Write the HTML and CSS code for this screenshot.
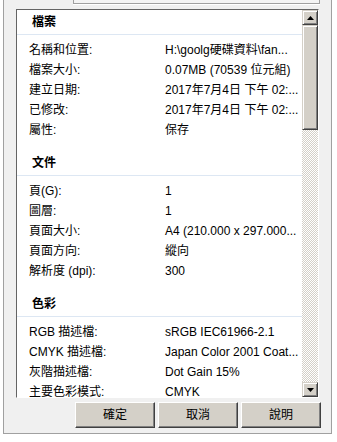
FILE: index.html
```html
<!DOCTYPE html>
<html>
<head>
    <meta charset="utf-8">
    <title>文件屬性</title>
    <link rel="stylesheet" href="styles.css">
</head>
<body>
    <div class="frame">
        <div class="top-box"></div>

        <div class="listbox">
            <div class="list-content">
                <div class="section">
                    <div class="section-title">檔案</div>
                    <div class="rows">
                        <div class="row"><span class="label">名稱和位置:</span><span class="value">H:\goolg硬碟資料\fan...</span></div>
                        <div class="row"><span class="label">檔案大小:</span><span class="value">0.07MB (70539 位元組)</span></div>
                        <div class="row"><span class="label">建立日期:</span><span class="value">2017年7月4日 下午 02:...</span></div>
                        <div class="row"><span class="label">已修改:</span><span class="value">2017年7月4日 下午 02:...</span></div>
                        <div class="row"><span class="label">屬性:</span><span class="value">保存</span></div>
                    </div>
                </div>
                <div class="section">
                    <div class="section-title">文件</div>
                    <div class="rows">
                        <div class="row"><span class="label">頁(G):</span><span class="value">1</span></div>
                        <div class="row"><span class="label">圖層:</span><span class="value">1</span></div>
                        <div class="row"><span class="label">頁面大小:</span><span class="value">A4 (210.000 x 297.000...</span></div>
                        <div class="row"><span class="label">頁面方向:</span><span class="value">縱向</span></div>
                        <div class="row"><span class="label">解析度 (dpi):</span><span class="value">300</span></div>
                    </div>
                </div>
                <div class="section">
                    <div class="section-title">色彩</div>
                    <div class="rows">
                        <div class="row"><span class="label">RGB 描述檔:</span><span class="value">sRGB IEC61966-2.1</span></div>
                        <div class="row"><span class="label">CMYK 描述檔:</span><span class="value">Japan Color 2001 Coat...</span></div>
                        <div class="row"><span class="label">灰階描述檔:</span><span class="value">Dot Gain 15%</span></div>
                        <div class="row"><span class="label">主要色彩模式:</span><span class="value">CMYK</span></div>
                    </div>
                </div>
            </div>

            <div class="scrollbar">
                <div class="sb-btn">
                    <svg width="7" height="4" viewBox="0 0 7 4"><path d="M3.5 0 L7 4 L0 4 Z" fill="#000"/></svg>
                </div>
                <div class="sb-thumb"></div>
                <div class="sb-track"></div>
                <div class="sb-btn">
                    <svg width="7" height="4" viewBox="0 0 7 4"><path d="M0 0 L7 0 L3.5 4 Z" fill="#000"/></svg>
                </div>
            </div>
        </div>

        <div class="buttons">
            <div class="btn">確定</div>
            <div class="btn">取消</div>
            <div class="btn">說明</div>
        </div>
    </div>
</body>
</html>
```

FILE: styles.css
```css
body {
    margin: 0;
    background: #ffffff;
    font-family: 'Liberation Sans', 'Noto Sans CJK TC', sans-serif;
    font-size: 12px;
    color: #000;
}

.frame {
    margin-left: 3px;
    width: 327px;
    height: 433px;
    background: #f0f0f0;
    border: 1px solid #a0a0a0;
    border-top: none;
    display: flex;
    flex-direction: column;
}

.top-box {
    margin-left: 69px;
    width: 245px;
    height: 3px;
    background: #f4f4f4;
    border: 1px solid #a0a0a0;
    border-top: none;
    box-shadow: 0 1px 0 #ffffff;
}

.listbox {
    margin-top: 5px;
    margin-left: 12px;
    width: 301px;
    height: 387px;
    display: flex;
    background: #ffffff;
    border: 1px solid;
    border-color: #646464 #ffffff #ffffff #646464;
}

.list-content {
    flex: 1;
    overflow: hidden;
}

.section-title {
    height: 24px;
    line-height: 24px;
    padding-left: 15px;
    font-weight: bold;
    border-bottom: 1px solid #dde7f3;
}

.rows {
    padding: 5px 0 11px 12px;
}

.row {
    display: flex;
    height: 20px;
    line-height: 20px;
    white-space: nowrap;
}

.label {
    width: 136px;
}

.scrollbar {
    width: 16px;
    display: flex;
    flex-direction: column;
}

.sb-btn,
.sb-thumb {
    box-sizing: border-box;
    background: #d4d0c8;
    border: 1px solid;
    border-color: #d4d0c8 #404040 #404040 #d4d0c8;
    box-shadow: inset 1px 1px #ffffff, inset -1px -1px #808080;
}

.sb-btn {
    height: 15px;
    display: flex;
    align-items: center;
    justify-content: center;
}

.sb-thumb {
    height: 105px;
}

.sb-track {
    flex: 1;
    background: conic-gradient(#d4d0c8 25%, #ffffff 0 50%, #d4d0c8 0 75%, #ffffff 0) 0 0 / 2px 2px;
}

.buttons {
    margin-top: 4px;
    padding-right: 10px;
    display: flex;
    justify-content: flex-end;
    gap: 3px;
}

.btn {
    box-sizing: border-box;
    width: 80px;
    height: 26px;
    line-height: 24px;
    text-align: center;
    background: #d4d0c8;
    border: 1px solid;
    border-color: #ffffff #404040 #404040 #ffffff;
    box-shadow: inset -1px -1px #808080;
}
```
